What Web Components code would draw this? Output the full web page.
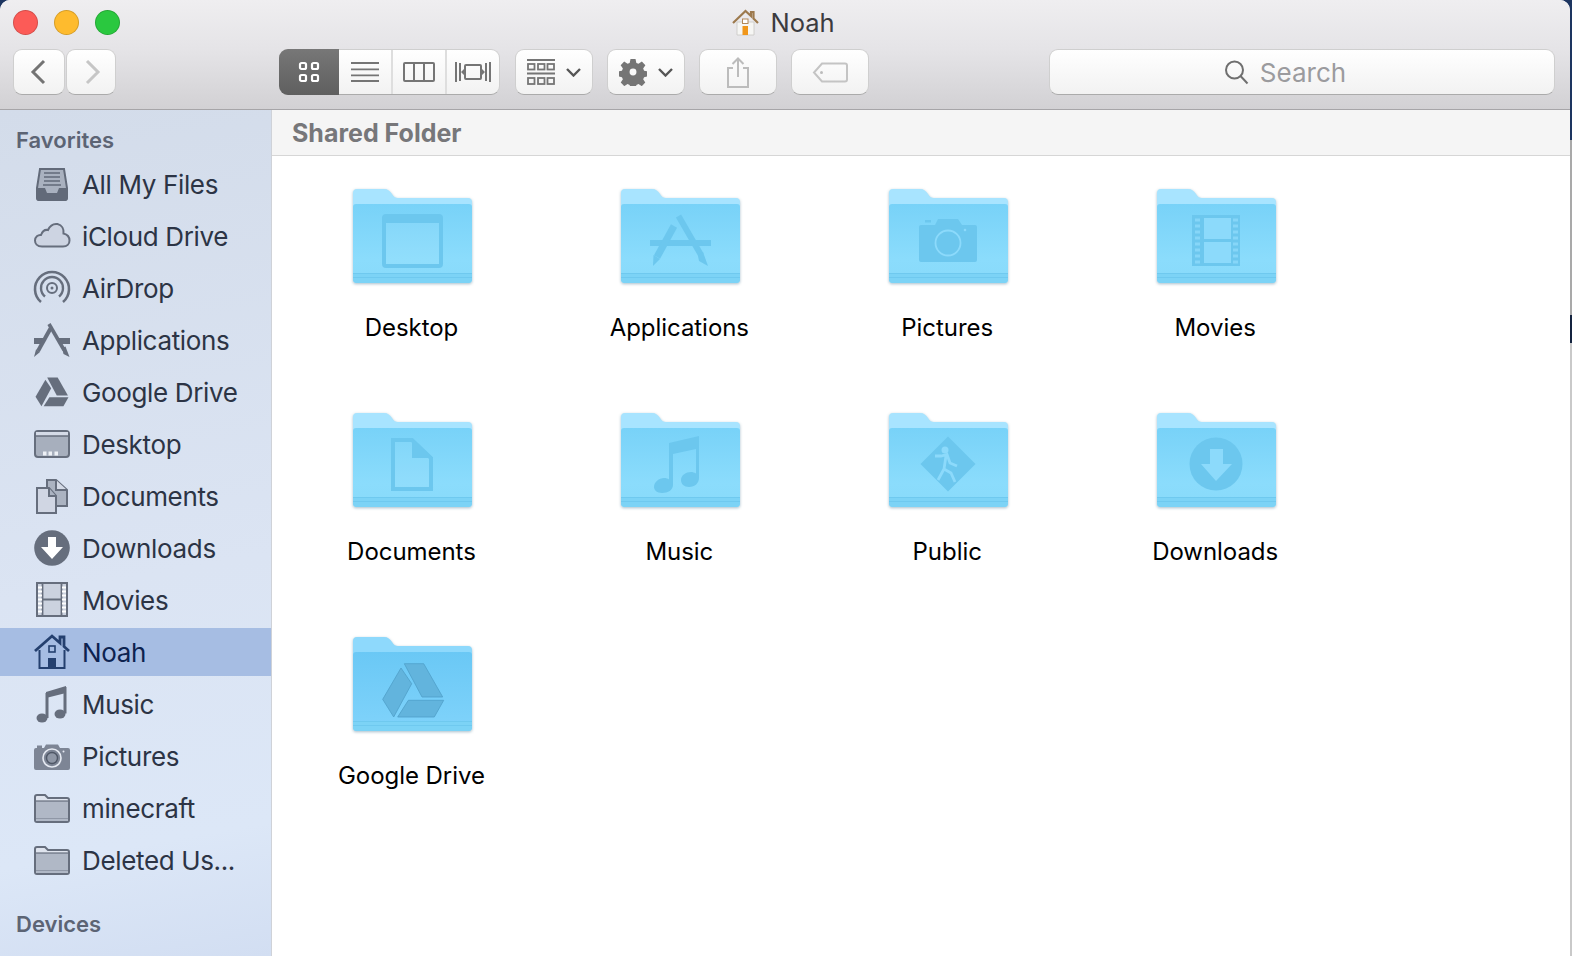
<!DOCTYPE html>
<html>
<head>
<meta charset="utf-8">
<title>Noah</title>
<style>
  html, body { margin: 0; height: 100%; overflow: hidden; }
  body {
    font-family: Inter, Roboto, "Liberation Sans", sans-serif;
    background: linear-gradient(to bottom, #1d3560 0, #1d3560 140px, #a9a9a9 140px, #a9a9a9 315px, #14233f 315px, #14233f 343px, #c9c9c9 343px);
  }
</style>
</head>
<body>
<finder-window>
  <title-bar>Noah</title-bar>
  <tool-bar></tool-bar>
  <side-bar slot="side">
    <side-heading>Favorites</side-heading>
    <side-item icon="files">All My Files</side-item>
    <side-item icon="cloud">iCloud Drive</side-item>
    <side-item icon="airdrop">AirDrop</side-item>
    <side-item icon="apps">Applications</side-item>
    <side-item icon="drive">Google Drive</side-item>
    <side-item icon="desktop">Desktop</side-item>
    <side-item icon="documents">Documents</side-item>
    <side-item icon="downloads">Downloads</side-item>
    <side-item icon="movies">Movies</side-item>
    <side-item icon="home" selected>Noah</side-item>
    <side-item icon="music">Music</side-item>
    <side-item icon="pictures">Pictures</side-item>
    <side-item icon="folder">minecraft</side-item>
    <side-item icon="folder">Deleted Us...</side-item>
    <side-heading class="devices">Devices</side-heading>
  </side-bar>
  <path-bar slot="main">Shared Folder</path-bar>
  <folder-grid slot="main">
    <folder-item glyph="desktop">Desktop</folder-item>
    <folder-item glyph="apps">Applications</folder-item>
    <folder-item glyph="pictures">Pictures</folder-item>
    <folder-item glyph="movies">Movies</folder-item>
    <folder-item glyph="documents">Documents</folder-item>
    <folder-item glyph="music">Music</folder-item>
    <folder-item glyph="public">Public</folder-item>
    <folder-item glyph="downloads">Downloads</folder-item>
    <folder-item glyph="drive" deep>Google Drive</folder-item>
  </folder-grid>
</finder-window>

<script>
const DRIVE_PIECES = `
  <path d="M48 31L58.7 46.7 40.7 80 29.7 62.3Z"/>
  <path d="M51.3 26.7H70.7L89.7 60H69Z"/>
  <path d="M55.3 63.3H90.7L81.3 80H44.7Z"/>`;

const SIDE_ICONS = {
  files: `<path d="M8 4H32L35 23V33a2 2 0 0 1-2 2H7a2 2 0 0 1-2-2V23Z" fill="#a9b1bf" stroke="#626a79" stroke-width="2"/>
    <path d="M12 8H28M12 12H28M12 16H28M11 20H29" stroke="#626a79" stroke-width="1.6" fill="none"/>
    <path d="M4.500 23H13L15 28H25L27 23H35.500V33a3 3 0 0 1-3 3H7.500a3 3 0 0 1-3-3Z" fill="#626a79"/>`,
  cloud: `<path d="M10 29.500C5 29.500 3 26.500 3 23.500 3 20 6 17.500 9 18 10.500 14 13.500 12.500 16 13 18 8.500 22 6.500 25.500 7 30 8 32 12 31.500 16.500 35.500 17.500 37.500 20.500 37.500 23.500 37.500 27 35 29.500 31 29.500Z" fill="#cdd4e2" stroke="#666e7d" stroke-width="2"/>`,
  airdrop: `<g fill="none" stroke="#666e7d">
    <path d="M9 33A17 17 0 1 1 31 33" stroke-width="2.600"/>
    <path d="M13 27.500A11 11 0 1 1 27 27.500" stroke-width="2.400"/>
    <circle cx="20" cy="19" r="5" stroke-width="2"/>
    <circle cx="20" cy="19" r="1.500" fill="#666e7d" stroke="none"/></g>`,
  apps: `<path d="M2 17H14L11 23H2ZM26 17H38V23H29Z" fill="#666e7d"/>
    <path d="M18.500 7.500L6 30" stroke="#666e7d" stroke-width="4"/><path d="M4 28.500L2 36 8 31Z" fill="#666e7d"/>
    <path d="M17 3L32 29" stroke="#666e7d" stroke-width="3.600"/><path d="M30 27L33.500 25.500 37.500 36 31.500 33Z" fill="#666e7d"/>`,
  drive: `<g fill="#666e7d" transform="translate(-12.500 -10) scale(.54)">${DRIVE_PIECES}</g>`,
  desktop: `<rect x="3" y="6" width="34" height="26" rx="3" fill="#a7afbd" stroke="#666e7d" stroke-width="2"/>
    <rect x="4" y="7" width="32" height="4" fill="#d5dbe7"/><path d="M3 11H37" stroke="#666e7d" stroke-width="1.400"/>
    <path d="M11 26.500h3.500v4H11ZM16.500 26.500H20v4h-3.500ZM22.500 26.500H26v4h-3.500Z" fill="#eef1f6"/>`,
  documents: `<path d="M15 3H24L35 13V29H15Z" fill="#abb3c1" stroke="#666e7d" stroke-width="2"/>
    <path d="M24 3V13H35" fill="#d4dae6" stroke="#666e7d" stroke-width="2"/>
    <path d="M5 11H17L24 19V36H5Z" fill="#d0d6e3" stroke="#666e7d" stroke-width="2"/>
    <path d="M17 11V19H24" fill="#abb3c1" stroke="#666e7d" stroke-width="2"/>`,
  downloads: `<circle cx="20" cy="19" r="17.800" fill="#666e7d"/><path d="M16 8H24V18H31L20 30 9 18H16Z" fill="#fff"/>`,
  movies: `<rect x="5" y="2" width="30" height="33" fill="#cbd2df" stroke="#666e7d" stroke-width="2"/>
    <path d="M10.500 2V35M29.500 2V35M10.500 18.500H29.500" stroke="#666e7d" stroke-width="1.800"/>
    <path d="M6 6.500H10M6 10.500H10M6 14.500H10M6 18.500H10M6 22.500H10M6 26.500H10M6 30.500H10M30 6.500H34M30 10.500H34M30 14.500H34M30 18.500H34M30 22.500H34M30 26.500H34M30 30.500H34" stroke="#fff" stroke-width="2"/>`,
  home: `<path d="M3 18L20 3 28 10V4H32V13.500L37 18" fill="none" stroke="#24406f" stroke-width="2.800"/>
    <path d="M7.500 17V35H32.500V17" fill="none" stroke="#24406f" stroke-width="2"/>
    <rect x="17" y="13" width="6" height="6" fill="none" stroke="#24406f" stroke-width="1.600"/>
    <rect x="16" y="25" width="8" height="10" fill="#24406f"/>`,
  music: `<path d="M14 7L34 1V8L14 13Z" fill="#666e7d"/><path d="M15 8V33M33 2V28.500" stroke="#666e7d" stroke-width="3" fill="none"/>
    <ellipse cx="10" cy="33" rx="5.500" ry="4.500" fill="#666e7d"/><ellipse cx="28" cy="29" rx="5.500" ry="4.500" fill="#666e7d"/>`,
  pictures: `<path d="M4 11H12L14 7.500H26L28 11H36a2 2 0 0 1 2 2V31a2 2 0 0 1-2 2H4a2 2 0 0 1-2-2V13a2 2 0 0 1 2-2Z" fill="#7d8595"/>
    <path d="M5 8.500H10V11H5Z" fill="#7d8595"/>
    <circle cx="20" cy="21" r="9" fill="#7d8595" stroke="#e6eaf2" stroke-width="1.600"/>
    <circle cx="20" cy="21" r="5.500" fill="#8f97a6" stroke="#4f5766" stroke-width="1.400"/>
    <circle cx="31.500" cy="14.500" r="1" fill="#e6eaf2"/>`,
  folder: `<path d="M3 8a2 2 0 0 1 2-2H13L16 9H35a2 2 0 0 1 2 2V31a2 2 0 0 1-2 2H5a2 2 0 0 1-2-2Z" fill="#dfe4ee" stroke="#666e7d" stroke-width="2"/>
    <path d="M4 12H36V31a1 1 0 0 1-1 1H5a1 1 0 0 1-1-1Z" fill="#b0b8c6"/>
    <path d="M4 12H36" stroke="#666e7d" stroke-width="1.200"/><path d="M4 29.500H36" stroke="#8f97a6" stroke-width="1"/>`
};

const FOLDER_GLYPHS = {
  desktop: `<rect x="31" y="27" width="57" height="50" rx="2" fill="rgba(255,255,255,.06)" stroke="#6cc7ee" stroke-width="4"/>
    <rect x="31" y="27" width="57" height="7" fill="#6cc7ee"/>`,
  apps: `<rect x="29" y="51" width="61" height="6" fill="#6cc7ee"/>
    <path d="M53 37L36 68" stroke="#6cc7ee" stroke-width="7"/><path d="M32.500 66L32 77 39 70Z" fill="#6cc7ee"/>
    <path d="M57.500 27L80 66" stroke="#6cc7ee" stroke-width="6"/><path d="M77 67L82 63 87 77 78 72Z" fill="#6cc7ee"/>`,
  pictures: `<path d="M32 36H46L49 30H69L73 36H86a2 2 0 0 1 2 2V71a2 2 0 0 1-2 2H32a2 2 0 0 1-2-2V38a2 2 0 0 1 2-2Z" fill="#6cc7ee"/>
    <rect x="36" y="31" width="6" height="2.500" fill="#6cc7ee"/>
    <circle cx="59" cy="54" r="12.500" fill="none" stroke="#8cdafb" stroke-width="1.800"/><circle cx="76" cy="41" r="1.300" fill="#8cdafb"/>`,
  movies: `<rect x="35" y="26" width="48" height="51" fill="#6cc7ee"/>
    <rect x="47" y="29" width="27" height="21" fill="#8cdafb"/><rect x="47" y="53" width="27" height="21" fill="#8cdafb"/>
    <path d="M38 31H43M38 37H43M38 43H43M38 49H43M38 55H43M38 61H43M38 67H43M38 73H43M76 31H81M76 37H81M76 43H81M76 49H81M76 55H81M76 61H81M76 67H81M76 73H81" stroke="#86d6f8" stroke-width="3"/>`,
  documents: `<path d="M40 27H59L78 45V76H40Z" fill="rgba(255,255,255,.05)" stroke="#6cc7ee" stroke-width="4"/><path d="M59 26L80 45H59Z" fill="#6cc7ee"/>`,
  music: `<path d="M48 31L78 24V66C78 71 74 75 68 75 63 75 60 72 60 68 60 63 65 60 70 60 72 60 73 60.500 75 61.500V37L52 42V73C52 78 47 81 41 81 36 81 33 78 33 75 33 70 38 66 43 66 45 66 47 66.500 48 67.500Z" fill="#6cc7ee" transform="translate(0 -1)"/>`,
  public: `<path d="M59 23.500L86.500 51 59 78.500 31.500 51Z" fill="#6cc7ee"/>
    <circle cx="56" cy="37" r="3.500" fill="#8cdafb"/>
    <path d="M46 43H52L58 41.500 61 50 68 53M57 43L55 56 49 67M55 56L62 60 66 69" fill="none" stroke="#8cdafb" stroke-width="2.800"/>`,
  downloads: `<circle cx="59" cy="51" r="26.500" fill="#6cc7ee"/><path d="M53 36H66V51H75L59 68 44 51H53Z" fill="#8cdafb"/>`,
  drive: `<g fill="#62b4dd" stroke="#4f9fc9" stroke-width=".8">${DRIVE_PIECES}</g>`
};

class FinderWindow extends HTMLElement {
  constructor() {
    super();
    this.attachShadow({ mode: "open" });
    this.shadowRoot.innerHTML = `
      <style>
        :host {
          display: flex;
          flex-direction: column;
          width: 1570px;
          height: 956px;
          background: #fff;
          border-radius: 10px 10px 0 0;
          overflow: hidden;
        }
        .top {
          flex: none;
          height: 109px;
          display: flex;
          flex-direction: column;
          background: linear-gradient(#efeef0, #e5e4e7 45%, #d2d1d4);
          border-bottom: 1px solid #a6a5a8;
        }
        .body { flex: 1; display: flex; min-height: 0; }
        .main { flex: 1; display: flex; flex-direction: column; min-width: 0; }
      </style>
      <div class="top"><slot></slot></div>
      <div class="body">
        <slot name="side"></slot>
        <div class="main"><slot name="main"></slot></div>
      </div>
    `;
  }
}

class TitleBar extends HTMLElement {
  constructor() {
    super();
    this.attachShadow({ mode: "open" });
    this.shadowRoot.innerHTML = `
      <style>
        :host {
          display: flex;
          align-items: center;
          height: 45px;
          padding-left: 13px;
          position: relative;
          font-size: 25.500px;
          color: #3b3b3f;
        }
        .lights { display: flex; gap: 16px; }
        .lights i { width: 23px; height: 23px; border-radius: 50%; border: .5px solid rgba(0,0,0,.16); }
        .title {
          position: absolute;
          left: 0;
          right: 3px;
          top: 0;
          height: 44px;
          display: flex;
          align-items: center;
          justify-content: center;
          gap: 11px;
        }
      </style>
      <div class="lights">
        <i style="background:#fc5b57"></i><i style="background:#febb2e"></i><i style="background:#2ac83f"></i>
      </div>
      <div class="title">
        <svg width="27" height="27" viewBox="0 0 27 27">
          <path d="M5 13H22V26H5Z" fill="#f6f6f4" stroke="#c9c8c4" stroke-width=".8"/>
          <path d="M1 14L13.500 2 19 7V3H21.500V9.500L26 14" fill="none" stroke="#9d7a4e" stroke-width="2.200"/>
          <rect x="10.500" y="10" width="5.500" height="4.500" fill="#fff" stroke="#b2885a" stroke-width="1"/>
          <rect x="10.500" y="17" width="5.500" height="9" fill="#f0961a"/>
        </svg>
        <span><slot></slot></span>
      </div>
    `;
  }
}

class ToolButton extends HTMLElement {
  constructor() {
    super();
    this.attachShadow({ mode: "open" });
    this.shadowRoot.innerHTML = `
      <style>
        :host {
          display: flex;
          align-items: center;
          justify-content: center;
          box-sizing: border-box;
          height: 46px;
          background: linear-gradient(#fff, #f2f2f2);
          border: 1px solid #cfcfcf;
          border-bottom-color: #ababab;
          border-radius: 9px;
        }
      </style>
      <slot></slot>
    `;
  }
}

class ToolBar extends HTMLElement {
  constructor() {
    super();
    this.attachShadow({ mode: "open" });
    this.shadowRoot.innerHTML = `
      <style>
        :host {
          display: flex;
          align-items: flex-start;
          padding: 4px 15px 0 13px;
          font-size: 26px;
        }
        svg { display: block; }
        .nav { display: flex; gap: 1px; margin-right: 163px; }
        .views {
          display: flex;
          height: 46px;
          box-sizing: border-box;
          margin-right: 15px;
          background: linear-gradient(#fff, #f2f2f2);
          border: 1px solid #cfcfcf;
          border-bottom-color: #ababab;
          border-radius: 9px;
        }
        .views div {
          display: flex;
          align-items: center;
          justify-content: center;
          border-left: 2px solid #dedede;
        }
        .views .on {
          margin: -1px 0 -1px -1px;
          border: 0;
          border-radius: 9px 0 0 9px;
          background: linear-gradient(#777, #5f5f5f);
        }
        .gap { margin-right: 14px; }
        .search {
          margin-left: auto;
          width: 506px;
          gap: 11px;
          padding-right: 34px;
          color: #9b9b9e;
        }
      </style>
      <div class="nav">
        <tool-button style="width:52px">
          <svg style="margin-right:3px" width="16" height="26" viewBox="0 0 16 26"><path d="M14 2L3 13 14 24" fill="none" stroke="#747474" stroke-width="3"/></svg>
        </tool-button>
        <tool-button style="width:50px">
          <svg style="margin-left:3px" width="16" height="26" viewBox="0 0 16 26"><path d="M2 2L13 13 2 24" fill="none" stroke="#c6c6c6" stroke-width="3"/></svg>
        </tool-button>
      </div>
      <div class="views">
        <div class="on" style="width:60px">
          <svg width="22" height="22" viewBox="0 0 22 22" fill="none" stroke="#fff" stroke-width="2.200">
            <rect x="2" y="2" width="6" height="6" rx="1.500"/><rect x="14" y="2" width="6" height="6" rx="1.500"/>
            <rect x="2" y="14" width="6" height="6" rx="1.500"/><rect x="14" y="14" width="6" height="6" rx="1.500"/>
          </svg>
        </div>
        <div style="width:52px;border-left:0">
          <svg width="28" height="20" viewBox="0 0 28 20" stroke="#757575" stroke-width="1.800"><path d="M0 1H28M0 7.300H28M0 13.300H28M0 19H28"/></svg>
        </div>
        <div style="width:52px">
          <svg width="32" height="20" viewBox="0 0 32 20" fill="none" stroke="#757575" stroke-width="2"><rect x="1" y="1" width="30" height="18" rx="1"/><path d="M11 1V19M21 1V19"/></svg>
        </div>
        <div style="width:52px">
          <svg width="36" height="20" viewBox="0 0 36 20" fill="none" stroke="#757575" stroke-width="2">
            <path d="M1 0V20M5 1V19M35 0V20M31 1V19"/><rect x="10" y="3" width="16" height="14" rx="1"/>
            <path d="M6 10L9 7V13ZM30 10L27 7V13Z" fill="#757575" stroke="none"/>
          </svg>
        </div>
      </div>
      <tool-button class="gap" style="width:78px;gap:11px">
        <svg width="28" height="26" viewBox="0 0 28 26" fill="none" stroke="#757575">
          <path d="M0 1H28M0 14.500H28" stroke-width="1.800"/>
          <g stroke-width="1.800"><rect x="1" y="5" width="6.500" height="5.500"/><rect x="11" y="5" width="6.500" height="5.500"/><rect x="20.500" y="5" width="6.500" height="5.500"/>
          <rect x="1" y="19" width="6.500" height="6"/><rect x="11" y="19" width="6.500" height="6"/><rect x="20.500" y="19" width="6.500" height="6"/></g>
        </svg>
        <svg width="15" height="9" viewBox="0 0 15 9"><path d="M1 1L7.500 7.500 14 1" fill="none" stroke="#555" stroke-width="2.400"/></svg>
      </tool-button>
      <tool-button class="gap" style="width:78px;gap:11px">
        <svg width="28" height="28" viewBox="0 0 28 28">
          <path fill="#757575" fill-rule="evenodd" d="M11.300 0h5.400l.9 4.200 2.300 1 3.600-2.400 3.800 3.800-2.400 3.600 1 2.300 4 .8v5.400l-4 .9-1 2.300 2.300 3.500-3.800 3.800-3.500-2.300-2.300 1-.9 4h-5.400l-.9-4-2.300-1-3.500 2.300-3.800-3.800 2.300-3.500-1-2.300-4-.9v-5.400l4-.8 1-2.300-2.400-3.600 3.800-3.800 3.600 2.400 2.300-1ZM14 10.300a3.700 3.700 0 1 0 0 7.400 3.700 3.700 0 0 0 0-7.400Z" transform="translate(1 1) scale(.93)"/>
        </svg>
        <svg width="15" height="9" viewBox="0 0 15 9"><path d="M1 1L7.500 7.500 14 1" fill="none" stroke="#555" stroke-width="2.400"/></svg>
      </tool-button>
      <tool-button class="gap" style="width:78px">
        <svg width="24" height="31" viewBox="0 0 24 31" fill="none" stroke="#bcbcbc" stroke-width="2">
          <path d="M7 11H2V30H22V11H17M12 20V2M6.500 7L12 1.500 17.500 7"/>
        </svg>
      </tool-button>
      <tool-button style="width:78px">
        <svg width="36" height="21" viewBox="0 0 36 21" fill="none">
          <path d="M10 1.500H33a2 2 0 0 1 2 2V17.500a2 2 0 0 1-2 2H10L2 10.500Z" stroke="#c4c4c4" stroke-width="2"/>
          <circle cx="9.500" cy="10.500" r="1.500" fill="#bcbcbc"/>
        </svg>
      </tool-button>
      <tool-button class="search">
        <svg width="25" height="25" viewBox="0 0 25 25" fill="none" stroke="#6f6f6f" stroke-width="2"><circle cx="10.500" cy="10" r="8.500"/><path d="M16.500 16L23.500 23.500"/></svg>
        <span>Search</span>
      </tool-button>
    `;
  }
}

class SideBar extends HTMLElement {
  constructor() {
    super();
    this.attachShadow({ mode: "open" });
    this.shadowRoot.innerHTML = `
      <style>
        :host {
          flex: none;
          box-sizing: border-box;
          width: 272px;
          display: flex;
          flex-direction: column;
          gap: 4px;
          padding-top: 15px;
          background: linear-gradient(170deg, #d3dcea, #dbe4f3 55%, #dce7f7 85%, #d2def2);
          border-right: 1px solid #cfd2d8;
        }
      </style>
      <slot></slot>
    `;
  }
}

class SideHeading extends HTMLElement {
  constructor() {
    super();
    this.attachShadow({ mode: "open" });
    this.shadowRoot.innerHTML = `
      <style>
        :host {
          display: block;
          height: 31px;
          line-height: 30px;
          padding-left: 16px;
          font-size: 22px;
          font-weight: 600;
          color: #5c6474;
        }
        :host(.devices) { margin-top: 21px; }
      </style>
      <slot></slot>
    `;
  }
}

class SideItem extends HTMLElement {
  constructor() {
    super();
    this.attachShadow({ mode: "open" });
    const icon = SIDE_ICONS[this.getAttribute("icon")] || "";
    this.shadowRoot.innerHTML = `
      <style>
        :host {
          display: flex;
          align-items: center;
          gap: 10px;
          height: 48px;
          padding-left: 32px;
          font-size: 26px;
          letter-spacing: -.35px;
          color: #2c3445;
        }
        :host([selected]) { background: #a6bde3; color: #0d2350; }
        svg { flex: none; margin-top: 2px; }
      </style>
      <svg width="40" height="40" viewBox="0 0 40 40">${icon}</svg>
      <span><slot></slot></span>
    `;
  }
}

class PathBar extends HTMLElement {
  constructor() {
    super();
    this.attachShadow({ mode: "open" });
    this.shadowRoot.innerHTML = `
      <style>
        :host {
          flex: none;
          display: flex;
          align-items: center;
          box-sizing: border-box;
          height: 46px;
          padding: 1px 0 0 20px;
          background: #f5f5f5;
          border-bottom: 1px solid #d6d6d6;
          font-size: 25px;
          font-weight: 700;
          color: #77777a;
        }
      </style>
      <slot></slot>
    `;
  }
}

class FolderGrid extends HTMLElement {
  constructor() {
    super();
    this.attachShadow({ mode: "open" });
    this.shadowRoot.innerHTML = `
      <style>
        :host {
          flex: 1;
          display: grid;
          grid-template-columns: repeat(4, 267.900px);
          grid-auto-rows: 223.800px;
          padding: 33px 0 0 7px;
        }
      </style>
      <slot></slot>
    `;
  }
}

class FolderItem extends HTMLElement {
  constructor() {
    super();
    this.attachShadow({ mode: "open" });
    const glyph = FOLDER_GLYPHS[this.getAttribute("glyph")] || "";
    const deep = this.hasAttribute("deep");
    const id = this.getAttribute("glyph");
    const backColor = deep ? "#8ed9fc" : "#a8e4ff";
    const stops = deep
      ? `<stop offset="0" stop-color="#6ac8f5"/><stop offset="1" stop-color="#80d3fb"/>`
      : `<stop offset="0" stop-color="#78d2f8"/><stop offset=".7" stop-color="#8bdcfc"/><stop offset="1" stop-color="#88dafa"/>`;
    this.shadowRoot.innerHTML = `
      <style>
        :host {
          display: flex;
          flex-direction: column;
          align-items: center;
          font-size: 24px;
          letter-spacing: -.05px;
          color: #000;
        }
        svg {
          display: block;
          flex: none;
          overflow: visible;
          filter: drop-shadow(0 1.500px 1.500px rgba(60, 110, 140, .45));
        }
        .label { margin-top: 26px; padding-right: 3px; line-height: 34px; }
      </style>
      <svg width="120" height="96" viewBox="0 0 120 96">
        <defs>
          <linearGradient id="f-${id}" x1="0" y1="0" x2="0" y2="1">${stops}</linearGradient>
        </defs>
        <path d="M0 4a4 4 0 0 1 4-4H31C35 0 37 2 39 5 41 8 42 9 46 9H115a4 4 0 0 1 4 4V90a4 4 0 0 1-4 4H4a4 4 0 0 1-4-4Z" fill="${backColor}"/>
        <path d="M0 18a3 3 0 0 1 3-3H116a3 3 0 0 1 3 3V90a4 4 0 0 1-4 4H4a4 4 0 0 1-4-4Z" fill="url(#f-${id})"/>
        <path d="M0 84H119V90a4 4 0 0 1-4 4H4a4 4 0 0 1-4-4Z" fill="#7cd3f6"/>
        <path d="M0 84.500H119M0 88.500H119" stroke="#6cc7ee" stroke-width=".8"/>
        ${glyph}
      </svg>
      <div class="label"><slot></slot></div>
    `;
  }
}

customElements.define("finder-window", FinderWindow);
customElements.define("title-bar", TitleBar);
customElements.define("tool-button", ToolButton);
customElements.define("tool-bar", ToolBar);
customElements.define("side-bar", SideBar);
customElements.define("side-heading", SideHeading);
customElements.define("side-item", SideItem);
customElements.define("path-bar", PathBar);
customElements.define("folder-grid", FolderGrid);
customElements.define("folder-item", FolderItem);
</script>
</body>
</html>
